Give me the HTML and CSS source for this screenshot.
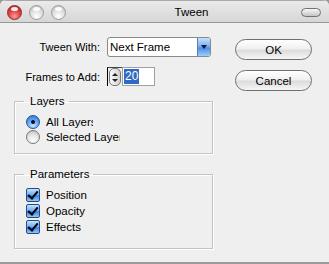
FILE: index.html
```html
<!DOCTYPE html>
<html lang="en">
<head>
    <meta charset="UTF-8">
    <title>Tween</title>
    <link rel="stylesheet" href="styles.css">
</head>
<body>
    <div class="window">
        <div class="titlebar">
            <div class="lights">
                <span class="light red"></span>
                <span class="light"></span>
                <span class="light"></span>
            </div>
            <div class="title">Tween</div>
            <span class="pill"></span>
        </div>

        <div class="content">
            <div class="main">
                <div class="row">
                    <label class="label">Tween With:</label>
                    <div class="select">
                        <span class="select-text">Next Frame</span>
                        <span class="select-arrow"></span>
                    </div>
                </div>

                <div class="row row-frames">
                    <label class="label">Frames to Add:</label>
                    <div class="spinner">
                        <span class="spin-btn">
                            <span class="tri-up"></span>
                            <span class="tri-down"></span>
                        </span>
                    </div>
                    <div class="field"><span class="sel">20</span></div>
                </div>

                <fieldset class="group group-layers">
                    <legend>Layers</legend>
                    <div class="choice"><span class="radio checked"></span><span class="choice-text clip-all">All Layers</span></div>
                    <div class="choice"><span class="radio"></span><span class="choice-text clip-sel">Selected Layer</span></div>
                </fieldset>

                <fieldset class="group group-params">
                    <legend>Parameters</legend>
                    <div class="choice"><span class="check"></span><span class="choice-text">Position</span></div>
                    <div class="choice"><span class="check"></span><span class="choice-text">Opacity</span></div>
                    <div class="choice"><span class="check"></span><span class="choice-text">Effects</span></div>
                </fieldset>
            </div>

            <div class="buttons">
                <button class="btn">OK</button>
                <button class="btn">Cancel</button>
            </div>
        </div>

        <div class="footer"></div>
    </div>
</body>
</html>
```

FILE: styles.css
```css
body {
    margin: 0;
    background-color: #9a9a9a;
    font-family: 'Liberation Sans', Arial, sans-serif;
    font-size: 11px;
    color: #000;
}

.window {
    width: 329px;
    height: 264px;
    display: flex;
    flex-direction: column;
    background-color: #efefef;
    border-radius: 6px 6px 0 0;
    overflow: hidden;
}

/* title bar */
.titlebar {
    height: 22px;
    border-bottom: 1px solid #989898;
    background: linear-gradient(#ebebeb, #d6d6d6);
    display: flex;
    align-items: center;
    padding: 0 8px 0 7px;
    box-shadow: inset 0 1px 0 #a8a8a8;
}

.lights {
    display: flex;
    gap: 7px;
    margin-top: 2px;
}

.light {
    width: 13px;
    height: 13px;
    border-radius: 50%;
    border: 1px solid #9c9c9c;
    background: radial-gradient(circle at 50% 80%, #ffffff 0%, #e2e2e2 45%, #b8b8b8 100%);
    position: relative;
}

.light::after {
    content: "";
    position: absolute;
    left: 3px;
    top: 1px;
    width: 7px;
    height: 4px;
    border-radius: 50%;
    background: rgba(255, 255, 255, 0.9);
}

.light.red {
    border-color: #8e2b2b;
    background: radial-gradient(circle at 50% 80%, #ff9a9a 0%, #e04848 45%, #a81c1c 100%);
}

.title {
    flex: 1;
    text-align: center;
    font-size: 11.5px;
    padding-left: 16px;
    margin-top: 1px;
}

.pill {
    width: 18px;
    height: 7px;
    border: 1px solid #707070;
    border-radius: 5px;
    background: linear-gradient(#f8f8f8, #c4c4c4);
    margin-top: 2px;
}

/* content */
.content {
    flex: 1;
    display: flex;
    padding: 14px 0 0 14px;
    gap: 22px;
}

.main {
    width: 199px;
}

.row {
    display: flex;
    align-items: center;
}

.row-frames {
    margin-top: 10px;
}

.label {
    width: 86px;
    text-align: right;
    margin-right: 7px;
}

.select {
    width: 102px;
    height: 18px;
    border: 1px solid #8a8a8a;
    border-radius: 3px;
    background-color: #fff;
    display: flex;
    align-items: center;
    overflow: hidden;
}

.select-text {
    flex: 1;
    padding-left: 2px;
    font-size: 11.5px;
}

.select-arrow {
    width: 12px;
    height: 18px;
    border-left: 1px solid #5a7fb8;
    background: linear-gradient(#c8e2fb, #7fb2ee 45%, #4d8de4 55%, #9bd0fb);
    position: relative;
}

.select-arrow::after {
    content: "";
    position: absolute;
    left: 3px;
    top: 7px;
    border-left: 3px solid transparent;
    border-right: 3px solid transparent;
    border-top: 4px solid #0c1a40;
}

.spinner {
    width: 14px;
    height: 18px;
    border-left: 1px solid #000;
    border-top: 1px solid #444;
    display: flex;
    align-items: center;
    justify-content: center;
    background-color: #efefef;
}

.spin-btn {
    width: 10px;
    height: 16px;
    border: 1px solid #777;
    border-radius: 5px;
    background: linear-gradient(to right, #fafafa, #cfcfcf);
    display: flex;
    flex-direction: column;
    align-items: center;
    justify-content: center;
    gap: 3px;
}

.tri-up {
    border-left: 3px solid transparent;
    border-right: 3px solid transparent;
    border-bottom: 3px solid #222;
}

.tri-down {
    border-left: 3px solid transparent;
    border-right: 3px solid transparent;
    border-top: 3px solid #222;
}

.field {
    width: 30px;
    height: 17px;
    border: 1px solid #a0a0a0;
    background-color: #fff;
    display: flex;
    align-items: center;
    padding-left: 1px;
}

.sel {
    background-color: #316ac5;
    color: #fff;
    font-size: 12px;
    line-height: 15px;
    padding: 0 1px;
}

/* groups */
.group {
    margin: 9px 0 0 0;
    border: 1px solid #c4c4c4;
    box-shadow: 1px 1px 0 #fff, inset 1px 1px 0 #fff;
    padding: 6px 0 9px 11px;
    min-width: 0;
}

.group-params {
    margin-top: 14px;
    padding-top: 6px;
    padding-bottom: 13px;
}

.group legend {
    padding: 0 4px 0 6px;
    margin-left: -2px;
    line-height: 13px;
    font-size: 11.5px;
}

.choice {
    display: flex;
    align-items: center;
    height: 15px;
}

.group-params .choice {
    height: 16px;
}

.choice-text {
    margin-left: 6px;
    font-size: 11.5px;
    white-space: nowrap;
}

.clip-all {
    width: 47px;
    overflow: hidden;
}

.clip-sel {
    width: 74px;
    overflow: hidden;
}

.radio {
    width: 12px;
    height: 12px;
    border-radius: 50%;
    border: 1px solid #7a7a7a;
    background: radial-gradient(circle at 50% 80%, #ffffff 0%, #e6e6e6 50%, #b4b4b4 100%);
    position: relative;
}

.radio.checked {
    border-color: #2a4f8c;
    background: radial-gradient(circle at 50% 80%, #bfe6ff 0%, #5fa8f4 50%, #2c6cd0 100%);
}

.radio.checked::after {
    content: "";
    position: absolute;
    left: 4px;
    top: 4px;
    width: 4px;
    height: 4px;
    border-radius: 50%;
    background-color: #0a0a20;
}

.check {
    width: 12px;
    height: 12px;
    border: 1px solid #274a86;
    border-radius: 2px;
    background: linear-gradient(#c4e4fd, #6aaaf2 50%, #3c82e4 55%, #8cc8fa);
    position: relative;
}

.check::after {
    content: "";
    position: absolute;
    left: 3px;
    top: 0px;
    width: 4px;
    height: 8px;
    border-right: 2px solid #000;
    border-bottom: 2px solid #000;
    transform: rotate(40deg);
}

/* buttons */
.buttons {
    display: flex;
    flex-direction: column;
    gap: 10px;
    padding-top: 2px;
}

.btn {
    width: 77px;
    height: 21px;
    border: 1px solid #6f6f6f;
    border-radius: 11px;
    background: linear-gradient(#ffffff, #f0f0f0 45%, #dcdcdc 55%, #f6f6f6);
    font-family: 'Liberation Sans', Arial, sans-serif;
    font-size: 11.5px;
    color: #000;
    padding: 0;
}

.footer {
    height: 2px;
    background-color: #9a9a9a;
}
```
